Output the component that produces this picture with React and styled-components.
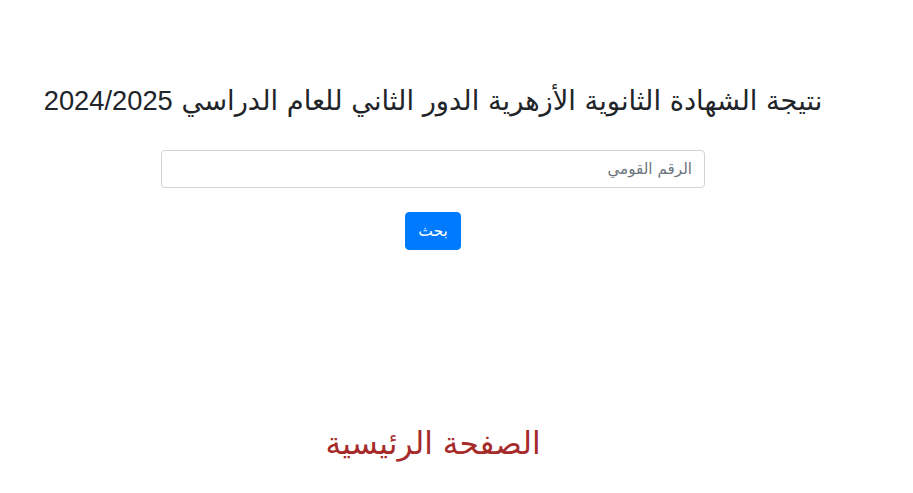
import React from "react";
import styled, { createGlobalStyle } from "styled-components";

const Global = createGlobalStyle`
  html, body { margin: 0; padding: 0; background: #fff; }
  body {
    font-family: "DejaVu Sans", sans-serif;
    color: #212529;
    font-size: 16px;
    line-height: 1.5;
  }
`;

const Page = styled.div`
  direction: rtl;
  width: 866px;
  display: flex;
  flex-direction: column;
  align-items: center;
  padding-top: 85px;
`;

const Title = styled.h3`
  margin: 0;
  font-size: 27.3px;
  font-weight: 400;
  line-height: 1.2;
  text-align: center;
`;

const Year = styled.span`
  font-family: "Liberation Sans", Arial, sans-serif;
`;

const Form = styled.form`
  display: flex;
  flex-direction: column;
  align-items: center;
  gap: 24px;
  margin-top: 32px;
`;

const Input = styled.input`
  box-sizing: border-box;
  width: 544px;
  height: 38px;
  padding: 6px 12px;
  font-family: inherit;
  font-size: 15.2px;
  color: #495057;
  border: 1px solid #ced4da;
  border-radius: 4px;
  direction: rtl;
  outline: none;
  &::placeholder { color: #6c757d; }
`;

const Button = styled.button`
  box-sizing: border-box;
  width: 56px;
  height: 38px;
  font-family: inherit;
  font-size: 15.6px;
  color: #fff;
  background: #007bff;
  border: 1px solid #007bff;
  border-radius: 4px;
  padding: 0;
`;

const HomeLink = styled.a`
  margin-top: 175px;
  font-size: 31.2px;
  color: #a52a2a;
  text-decoration: none;
  line-height: 1.2;
`;

export default function App() {
  return (
    <>
      <Global />
      <Page>
        <Title>
          نتيجة الشهادة الثانوية الأزهرية الدور الثاني للعام الدراسي <Year>2024/2025</Year>
        </Title>
        <Form onSubmit={(e) => e.preventDefault()}>
          <Input placeholder="الرقم القومي" />
          <Button type="submit">بحث</Button>
        </Form>
        <HomeLink href="#">الصفحة الرئيسية</HomeLink>
      </Page>
    </>
  );
}
